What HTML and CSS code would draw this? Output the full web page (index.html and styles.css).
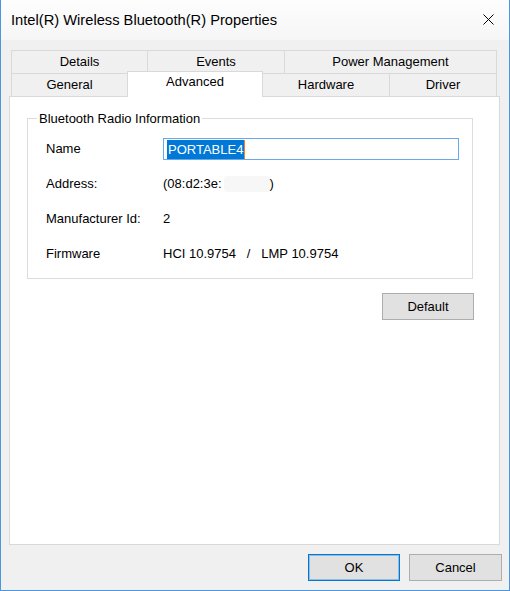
FILE: index.html
```html
<!DOCTYPE html>
<html lang="en">
<head>
    <meta charset="UTF-8">
    <meta name="viewport" content="width=device-width, initial-scale=1.0">
    <title>Intel(R) Wireless Bluetooth(R) Properties</title>
    <link rel="stylesheet" href="styles.css">
</head>
<body>
    <div class="window">
        <div class="title-bar">
            <span class="title-text">Intel(R) Wireless Bluetooth(R) Properties</span>
            <svg class="close-icon" width="11" height="11" viewBox="0 0 11 11">
                <path d="M0.5 0.5 L10.5 10.5 M10.5 0.5 L0.5 10.5" stroke="#000" stroke-width="1" fill="none"/>
            </svg>
        </div>

        <div class="client">
            <!-- 탭 두 줄 -->
            <div class="tabs">
                <div class="tab-row">
                    <div class="tab tab-details">Details</div>
                    <div class="tab tab-events">Events</div>
                    <div class="tab tab-power last">Power Management</div>
                </div>
                <div class="tab-row">
                    <div class="tab tab-general">General</div>
                    <div class="tab tab-advanced selected">Advanced</div>
                    <div class="tab tab-hardware">Hardware</div>
                    <div class="tab tab-driver last">Driver</div>
                </div>
            </div>

            <div class="panel">
                <fieldset class="group">
                    <legend>Bluetooth Radio Information</legend>
                    <div class="info-grid">
                        <div class="label">Name</div>
                        <div class="value">
                            <div class="textbox"><span class="selection">PORTABLE4</span></div>
                        </div>

                        <div class="label">Address:</div>
                        <div class="value">(08:d2:3e:<span class="redacted"></span>)</div>

                        <div class="label">Manufacturer Id:</div>
                        <div class="value">2</div>

                        <div class="label">Firmware</div>
                        <div class="value">HCI 10.9754&nbsp;&nbsp;&nbsp;/&nbsp;&nbsp;&nbsp;LMP 10.9754</div>
                    </div>
                </fieldset>

                <div class="panel-actions">
                    <button class="btn">Default</button>
                </div>
            </div>

            <div class="footer">
                <button class="btn btn-default">OK</button>
                <button class="btn btn-cancel">Cancel</button>
            </div>
        </div>
    </div>
</body>
</html>
```

FILE: styles.css
```css
* {
    box-sizing: border-box;
}

body {
    margin: 0;
    width: 510px;
    height: 591px;
    overflow: hidden;
    background-color: #f0f0f0;
    font-family: "Liberation Sans", Arial, sans-serif;
    font-size: 13px;
    color: #000;
}

.window {
    width: 510px;
    height: 591px;
    display: flex;
    flex-direction: column;
    border: 1px solid #4a97dd;
    border-top: none;
    background-color: #f0f0f0;
}

.title-bar {
    height: 40px;
    flex-shrink: 0;
    display: flex;
    align-items: center;
    justify-content: space-between;
    padding: 0 15px 0 10px;
    background: linear-gradient(#fdfdfd, #f6f6f6);
}

.title-text {
    font-size: 14.7px;
    padding-bottom: 1px;
}

.close-icon {
    display: block;
    margin-bottom: 1px;
}

.client {
    flex: 1;
    display: flex;
    flex-direction: column;
    padding: 10px 0 0 8px;
}

/* 탭 */
.tabs {
    margin-left: 2px;
    width: 486px;
}

.tab-row {
    display: flex;
    height: 23px;
    align-items: flex-start;
}

.tab {
    height: 23px;
    line-height: 22px;
    text-align: center;
    border-top: 1px solid #d9d9d9;
    border-left: 1px solid #d9d9d9;
    background-color: #f0f0f0;
}

.tab.last {
    border-right: 1px solid #d9d9d9;
}

.tab-details { width: 136px; }
.tab-events { width: 137px; }
.tab-power { width: 213px; }

.tab-general { width: 116px; }
.tab-advanced { width: 136px; }
.tab-hardware { width: 126px; }
.tab-driver { width: 108px; }

.tab.selected {
    position: relative;
    z-index: 1;
    margin-top: -2px;
    height: 26px;
    line-height: 20px;
    background-color: #fff;
    border-right: 1px solid #d9d9d9;
}

.tab.selected + .tab {
    border-left: none;
}

.panel {
    width: 491px;
    flex: 1;
    background-color: #fff;
    border: 1px solid #d9d9d9;
    padding: 14px 26px 0 17px;
}

.group {
    margin: 0;
    min-width: 0;
    border: 1px solid #dcdcdc;
    padding: 5px 10px 5px 18px;
    height: 168px;
}

.group legend {
    padding: 0 2px;
    margin-left: -9px;
    line-height: 15px;
}

.info-grid {
    display: grid;
    grid-template-columns: 117px 296px;
    grid-auto-rows: 35px;
    align-items: center;
}

.value {
    display: flex;
    align-items: center;
}

.textbox {
    width: 296px;
    height: 22px;
    border: 1px solid #68a9e8;
    padding: 1px 0 0 3px;
    display: flex;
    align-items: center;
}

.selection {
    background-color: #0078d7;
    color: #fff;
    line-height: 19px;
    padding: 0 1px;
    border-right: 1px solid #f08030;
}

.redacted {
    display: inline-block;
    width: 46px;
    height: 16px;
    margin-left: 2px;
    background-color: #f7f7f7;
    border-radius: 3px;
}

.panel-actions {
    display: flex;
    justify-content: flex-end;
    margin-top: 14px;
    margin-right: -1px;
}

.btn {
    width: 92px;
    height: 27px;
    font-family: "Liberation Sans", Arial, sans-serif;
    font-size: 13px;
    color: #000;
    background-color: #e1e1e1;
    border: 1px solid #adadad;
    padding: 0;
}

.footer {
    flex-shrink: 0;
    display: flex;
    justify-content: flex-end;
    gap: 9px;
    padding: 9px 7px 9px 0;
}

.btn-default {
    border-color: #0078d7;
    box-shadow: inset 0 0 0 1px rgba(0, 120, 215, 0.35);
}

.btn-cancel {
    width: 93px;
}
```
